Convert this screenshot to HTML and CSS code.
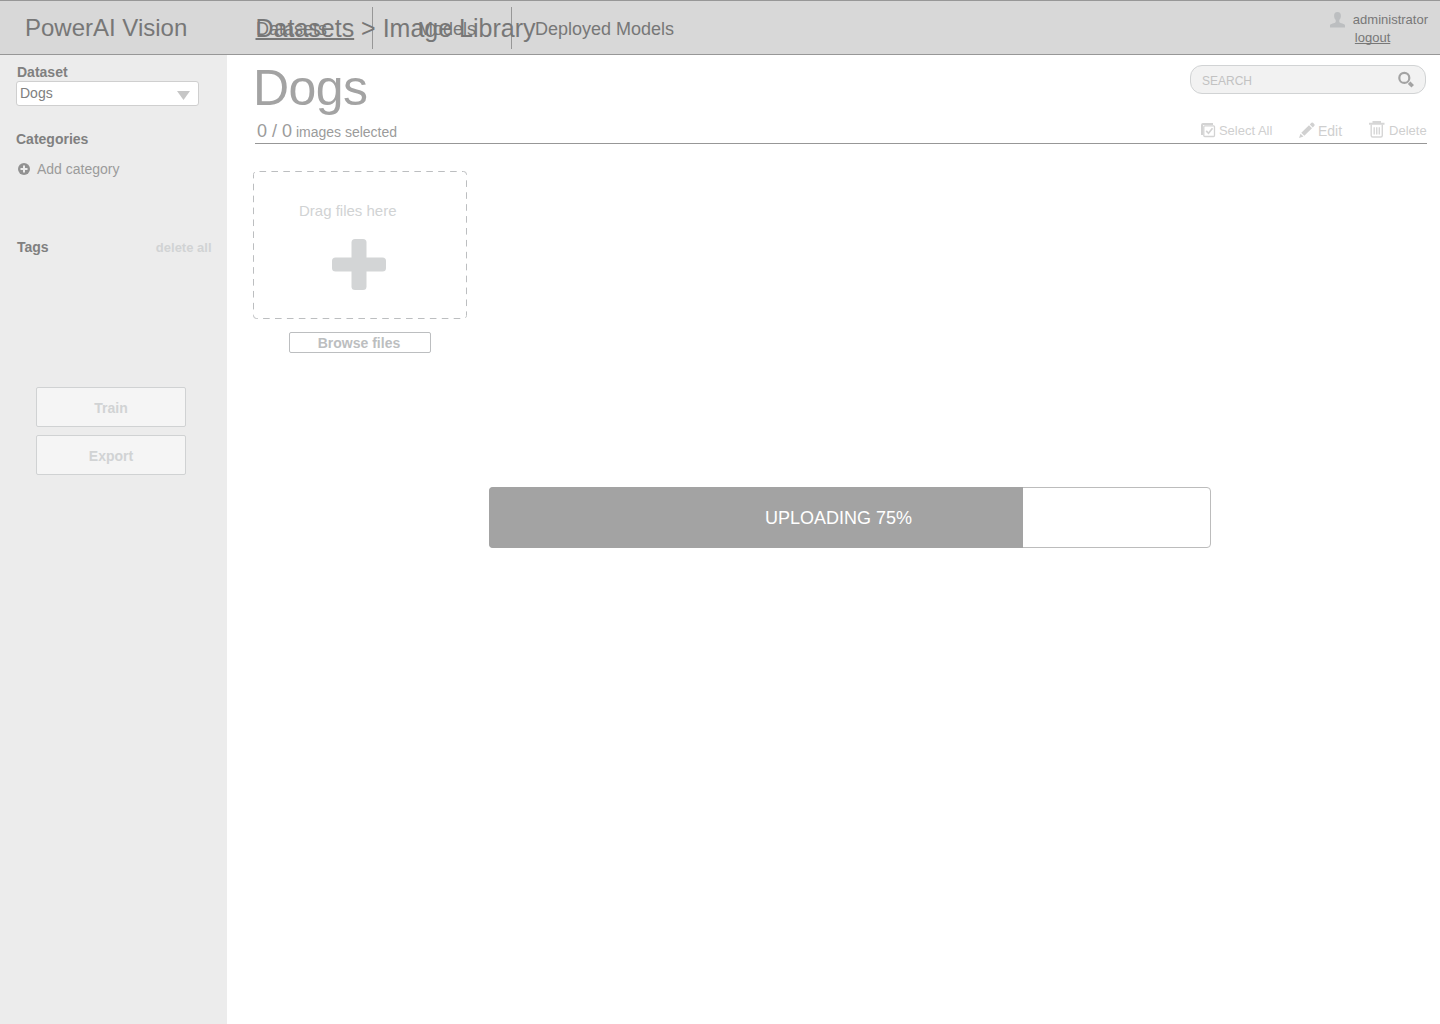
FILE: index.html
```html
<!DOCTYPE html>
<html lang="en">
<head>
<meta charset="utf-8">
<title>PowerAI Vision</title>
<link rel="stylesheet" href="styles.css">
</head>
<body>
<header class="topbar">
  <div class="brand">PowerAI Vision</div>
  <nav class="nav">
    <a class="nav-item">Datasets</a>
    <a class="nav-item nav-models">Models</a>
    <a class="nav-item nav-deployed">Deployed Models</a>
  </nav>
  <div class="breadcrumb"><a class="crumb-link">Datasets</a> &gt; Image Library</div>
  <div class="user">
    <svg class="user-icon" width="16" height="16" viewBox="0 0 16 16"><path d="M7.500 0C5.200 0 4 1.300 4.100 4C4.100 6 5 7.200 5.700 8V10C5 11.500 0 11.500 0 13.500V15.500H15V13.500C15 11.500 10 11.500 9.300 10V8C10 7.200 10.900 6 10.900 4C11 1.300 9.800 0 7.500 0Z" fill="#bcbec0"/></svg>
    <div class="user-text"><span>administrator</span><a class="logout">logout</a></div>
  </div>
</header>
<div class="body">
  <aside class="sidebar">
    <h2 class="label dataset-label">Dataset</h2>
    <div class="select"><span>Dogs</span><svg width="14" height="9" viewBox="0 0 14 9"><path d="M0 0H13L6.500 9Z" fill="#c6c6c6"/></svg></div>
    <h2 class="label categories-label">Categories</h2>
    <div class="add-category">
      <svg width="12" height="12" viewBox="0 0 12 12"><circle cx="6" cy="6" r="6" fill="#929292"/><path d="M6 2.500V9.500M2.500 6H9.500" stroke="#ececec" stroke-width="2"/></svg>
      <span>Add category</span>
    </div>
    <div class="tags"><h2 class="label">Tags</h2><span class="delete-all">delete all</span></div>
    <div class="actions"><div class="button">Train</div><div class="button">Export</div></div>
  </aside>
  <main class="main">
    <div class="title-row">
      <h1 class="title">Dogs</h1>
      <div class="search"><span class="search-text">SEARCH</span><svg width="18" height="18" viewBox="0 0 18 18" fill="none" stroke="#a3a3a3"><circle cx="7.300" cy="6.900" r="5" stroke-width="2.200"/><path d="M11.900 11.500L15.700 15.300" stroke-width="3.600"/><path d="M10.500 12.900L13.300 10.100" stroke="#f2f2f2" stroke-width=".7"/></svg></div>
    </div>
    <div class="toolbar">
      <div class="count"><span class="count-num">0 / 0</span> images selected</div>
      <div class="tools">
        <span class="tool select-all"><svg width="15" height="15" viewBox="0 0 15 15" fill="none" stroke="#d3d3d3"><path d="M1 12V2Q1 1 2 1H12" stroke-width="2"/><rect x="2.800" y="2.800" width="10.700" height="10.700" rx="1" stroke-width="1.300" fill="#fff"/><path d="M5.200 7.800L7.500 10.300L11.500 5.300" stroke-width="1.700"/></svg>Select All</span>
        <span class="tool edit"><svg width="16" height="16" viewBox="0 0 16 16" fill="#d1d1d1"><path d="M0 16L1.500 11.700L4.500 14.600ZM2.300 10.800L10 3.200L13 6.200L5.300 13.800ZM10.800 2.400L12.400 .8Q13.200 .1 14 .8L15.400 2.200Q16 2.900 15.400 3.700L13.800 5.400Z"/></svg>Edit</span>
        <span class="tool delete"><svg width="16" height="17" viewBox="0 0 16 17" fill="none" stroke="#d6d6d6"><path d="M0 2.800H15.500M4.500 2V.9H11V2" stroke-width="2"/><path d="M2.200 3.500V14.500Q2.200 16 3.700 16H11.800Q13.300 16 13.300 14.500V3.500M5.200 6.200V13.500M7.750 6.200V13.500M10.300 6.200V13.500" stroke-width="1.400"/></svg>Delete</span>
      </div>
    </div>
    <section class="uploader">
      <div class="dropzone">
        <svg class="drop-outline" width="214" height="148" viewBox="0 0 214 148"><rect x=".5" y=".5" width="213" height="147" rx="3" fill="none" stroke="#bcbec0" stroke-dasharray="6.600 5.313" stroke-dashoffset="-3"/></svg>
        <span class="drop-text">Drag files here</span>
        <svg class="plus" width="54" height="52" viewBox="0 0 54 52" fill="#d3d5d6"><rect x="19.500" y="0" width="15" height="51" rx="3.500"/><rect x="0" y="18.500" width="54" height="14" rx="3.500"/></svg>
      </div>
      <div class="browse">Browse files</div>
    </section>
    <div class="progress"><div class="progress-fill"></div><span class="progress-text">UPLOADING 75%</span></div>
  </main>
</div>
</body>
</html>
```

FILE: styles.css
```css
* { box-sizing: border-box; }
body { margin: 0; width: 1440px; height: 1024px; overflow: hidden; background: #fff; font-family: "Liberation Sans", Arial, sans-serif; font-size: 14px; color: #808080; }
h1, h2 { margin: 0; }
svg { display: block; flex: none; }

.topbar { position: relative; display: flex; height: 55px; background: #d8d8d8; border-top: 1px solid #979797; border-bottom: 1px solid #979797; color: #777; }
.brand { width: 255px; padding-left: 25px; font-size: 24px; line-height: 54px; white-space: nowrap; }
.nav { display: flex; height: 42px; margin-top: 6px; font-size: 18px; line-height: 45px; }
.nav-item { width: 118px; padding-left: 1px; border-right: 1px solid #979797; white-space: nowrap; }
.nav-models { width: 139px; padding-left: 45px; }
.nav-deployed { width: 180px; padding-left: 23px; border: 0; }
/* The breadcrumb lies over the navigation. */
.breadcrumb { position: absolute; left: 255px; top: 0; padding-left: 0.5px; font-size: 25px; line-height: 54px; white-space: nowrap; }
.crumb-link { text-decoration: underline; text-decoration-thickness: 2px; text-underline-offset: 1px; text-decoration-skip-ink: none; }
.user { display: flex; margin-left: auto; padding: 10px 12px 0 0; font-size: 13px; line-height: 18px; }
.user-icon { margin: 1px 7px 0 0; }
.user-text { display: flex; flex-direction: column; }
.logout { margin-left: 2px; text-decoration: underline; text-decoration-skip-ink: none; }

.body { display: flex; height: 969px; }
.sidebar { width: 227px; background: #ececec; padding: 8px 16px 0; }
.label { font-size: 14px; line-height: 18px; font-weight: 700; color: #808080; }
.dataset-label { padding-left: 1px; }
.select { display: flex; justify-content: space-between; align-items: center; width: 183px; height: 25px; padding: 0 7px 0 3px; background: #fff; border: 1px solid #cfcfcf; border-radius: 3px; line-height: 23px; }
.select svg { margin-top: 3px; }
.categories-label { margin-top: 24px; }
.add-category { display: flex; align-items: center; gap: 7px; margin: 12px 0 0 2px; line-height: 18px; color: #9b9b9b; }
.tags { display: flex; justify-content: space-between; margin-top: 60px; padding-left: 1px; margin-right: -0.5px; }
.delete-all { font-size: 13px; line-height: 19px; font-weight: 700; color: #d1d3d4; }
.actions { display: flex; flex-direction: column; gap: 8px; margin: 130px 0 0 20px; }
.button { width: 150px; height: 40px; background: #f5f5f5; border: 1px solid #d0d2d3; border-radius: 2px; color: #d1d3d4; font-weight: 700; line-height: 41px; text-align: center; }

.main { width: 1213px; padding: 10px 13px 0 28px; }
.title-row { display: flex; justify-content: space-between; height: 48px; }
.title { margin-left: -2px; font-size: 50px; line-height: 46px; font-weight: 400; letter-spacing: -0.6px; color: #a3a3a3; }
.search { display: flex; justify-content: space-between; align-items: center; width: 236px; height: 29px; margin-right: 1px; padding: 1px 10px 0 11px; background: #f2f2f2; border: 1px solid #d1d3d4; border-radius: 12px; color: #c2c2c2; font-size: 12px; }
.search-text { padding-top: 2px; }
.toolbar { display: flex; height: 31px; border-bottom: 1px solid #979797; color: #9b9b9b; }
.count { padding-left: 2px; line-height: 36px; }
.count-num { font-size: 18px; }
.tools { display: flex; margin-left: auto; color: #cfcfcf; font-size: 13px; line-height: 36px; }
.tool { display: flex; white-space: nowrap; }
.select-all svg { margin: 10px 3px 0 0; }
.edit { margin-left: 26.5px; font-size: 14px; }
.edit svg { margin: 9px 3px 0 0; }
.delete { margin-left: 27px; margin-right: 0.4px; }
.delete svg { margin: 8px 4px 0 0; }

.uploader { display: flex; flex-direction: column; align-items: center; width: 214px; margin: 27px 0 0 -2px; }
.dropzone { position: relative; display: flex; flex-direction: column; width: 214px; height: 148px; padding: 30px 46px 0; }
.drop-outline { position: absolute; left: 0; top: 0; }
.drop-text { font-size: 15px; line-height: 20px; color: #d1d3d4; white-space: nowrap; }
.plus { margin: 18px 0 0 33px; }
.browse { width: 142px; height: 21px; margin-top: 13px; padding-right: 2px; border: 1px solid #bcbec0; border-radius: 2px; color: #bcbec0; font-weight: 700; line-height: 21px; text-align: center; }
.progress { position: relative; width: 722px; height: 61px; margin: 134px 0 0 234px; border: 1px solid #bcbcbc; border-radius: 4px; }
.progress-fill { width: 534px; height: 61px; margin: -1px 0 0 -1px; background: #a3a3a3; border-radius: 4px 0 0 4px; }
.progress-text { position: absolute; left: 275px; top: 0; font-size: 18px; line-height: 60px; color: #fff; white-space: nowrap; }
```
